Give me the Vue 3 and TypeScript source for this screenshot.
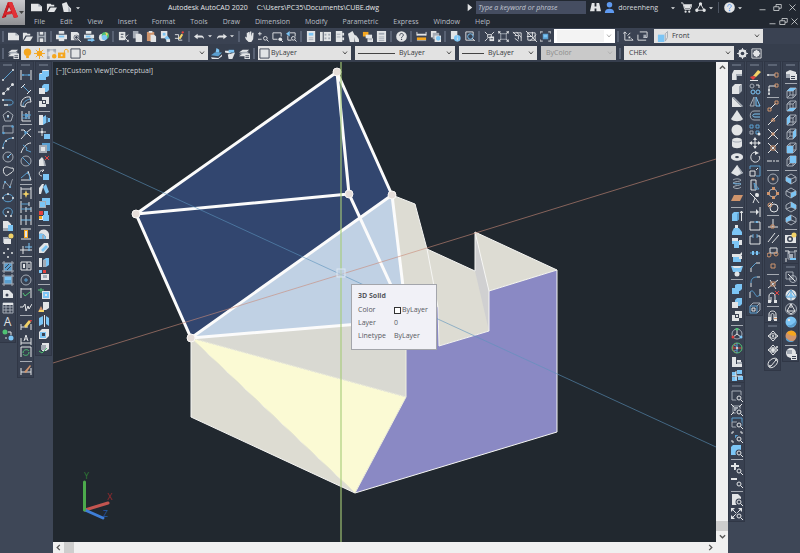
<script setup lang="ts">
import { h, ref } from 'vue'
import type { FunctionalComponent } from 'vue'

// Icon parts are "<tone>:<path>" joined by ";". A lower-case tone fills, an upper-case tone strokes.
// "@x,y,r" is a circle and "#x,y,w,h" a rectangle, on a 12 x 12 grid.
const tones: Record<string, string> = {
  w: '#e2e4e6', g: '#a3aab4', b: '#7cc5f5', d: '#5a9fd0', o: '#f5a61e', n: '#4fc274',
  r: '#e2423f', y: '#f2d267', k: '#3a4252', t: '#cf946c', u: '#5f9af0',
}

const box = 'G:M2 4H8V11H2ZM2 4L5 1H11V8L8 11M8 4L11 1M5 1V8H11M2 11L5 8'
const solid = 'g:M8 4L11 1V8L8 11Z;w:#1,4,7,7;w:M1 4L4 1H11L8 4Z'
const mag = 'W:@8,8,2;W:M9.5 9.5L11.5 11.5'
const lens = 'k:@8,8,3.5;W:@8,8,2;W:M9.5 9.5L12 12'

const icons: Record<string, string> = {
  new: 'w:M0 2H8L12 5V10H0Z;g:M8 2V5H12Z',
  open: 'w:M1 2H5L6 3H9V5H4L1 10Z;w:M5 6H12L9 11H2Z',
  page: 'w:M1 2L6 0L8 4L11 7V11H3Z;g:M8 4L11 11H8Z',
  save: 'g:#1,1,10,11;k:#3,1,6,4;w:#4,1,4,3;k:#3,7,6,5;w:#4,8,4,4',
  print: 'w:#3,0,6,3;w:#0,4,12,5;b:#3,5,6,2;w:#3,8,6,3',
  preview: 'w:M1 1H8L10 3V10H1Z;k:@7,7,3;W:@7,7,2;W:M9 9L12 12',
  publish: 'w:#2,0,6,3;w:#0,4,11,4;b:#2,5,5,2;b:M4 9H8V7L12 10L8 12V11H4Z',
  globe: 'w:@5,7,4;n:@8,5,4;b:@7,7,3;y:M8 1L11 3L9 6Z',
  cut: 'w:#1,1,7,9;k:M3 3H6V4H3ZM3 6H6V7H3Z;W:M5 5L11 11M11 4L5 10;W:@11,11,1',
  copy: 'g:#1,0,6,8;w:M4 3H9L11 5V12H4Z',
  paste: 't:#1,1,8,10;w:#3,0,4,2;w:M5 4H9L11 6V12H5Z',
  match: 'w:#1,0,7,8;b:#3,2,3,3;b:M5 7L8 5L11 9L8 12Z;w:#7,9,4,3',
  edit: 'W:M1 4H5V10H9M1 8H6;r:M8 1L10 0L11 2L9 3Z;y:M5 8L8 3L10 4L7 9Z',
  undo: 'w:M0 6L4 3V5H8C10 5 11 7 11 9C10 7 9 7 8 7H4V9Z',
  redo: 'w:M12 6L8 3V5H4C2 5 1 7 1 9C2 7 3 7 4 7H8V9Z',
  caret: 'w:M3 5H9L6 8Z',
  pan: 'w:M1 6L3 7V2H4.5V6V1H6V5L6.5 0.5H8V6L9 2H10.5L10 9L8 12H5L2 9Z',
  zoomrt: 'W:M0 3H4M2 1V5M0 9H4;' + mag,
  zoomwin: 'W:M1 2H10V6M1 2V9H6;w:@9,9,2;W:M10 10L12 12',
  zoomprev: 'W:M4 2H10V6M2 5V10H6;b:M0 3L4 0V6Z;' + mag,
  props: 'w:#1,0,9,12;b:#3,2,5,3;g:#3,7,5,1;g:#3,9,5,1',
  dc: 'w:#0,1,12,10;k:#3,1,1,10;g:#5,3,2,2;g:#9,3,2,2;g:#5,7,2,2;g:#9,7,2,2',
  tool: 'w:#2,0,7,12;g:#3,3,4,1;g:#3,6,4,1;w:#9,2,2,3;w:#9,7,2,3',
  sheet: 'w:M0 3L5 0L7 4V12H2Z;w:M6 4L9 5L12 9V12H8Z',
  markup: 'o:#1,1,6,5;w:#4,4,7,4;w:#6,8,6,4;g:#7,9,4,1',
  calc: 'w:#1,0,10,12;g:#3,2,6,2;g:#3,6,6,1;g:#3,8,6,1;g:#3,10,6,1',
  help: 'w:@6,6,5.8;K:M4 5C4 2 8 2 8 4.5C8 6 6 6 6 7.5;k:#5.4,8.5,1.3,1.3',
  measure: 'w:#1,3,10,2;o:#1,7,10,3;g:#1,10,10,1;W:M1 1V5M11 1V5',
  layerp: 'w:#1,0,6,7;g:#3,2,7,7;w:#5,5,7,7;b:@9,8,2.5',
  info: 'w:#1,0,7,9;b:@8,8,3.6;w:#7.5,7,1,3;w:#7.5,5,1,1',
  zoomobj: 'W:M2 1V10H11M2 1H10V5;B:@7,6,3;W:M9 8L12 11',
  vp1: 'W:M1 1L4 4M8 4L11 1M1 11L4 8;W:#4,4,4,3;w:#6,6,5,5;k:#7,8,3,1',
  vp2: 'G:#3,3,6,6;W:M0 1H3M1 0V3M9 1H12M11 0V3M0 11H3M1 9V12M9 11H12M11 9V12M1 1L3 3M11 1L9 3M1 11L3 9M11 11L9 9',
  vp3: 'W:M1 2H10V11M3 5H7V9;W:M1 1L5 5M5 1L10 7M3 8L7 11',
  vp4: 'W:#2,2,8,8;W:M0 0L12 12M11 4L4 11M1 6L7 6V1',
  vp5: 'd:#3,3,6,6;b:#4,4,4,3;W:M0 3V1H3M9 1H12V3M0 9V11H3M9 11H12V9',
  ucs: 'W:M2 1V10H11M0 3L2 1L4 3M9 8L11 10M5 5L8 2;w:#6,6,2,2',
  ucs2: 'W:M1 4V10H10M3 1H11V7H7;g:#7,4,3,3',
  cubeblue: 'W:M2 3L5 0.5H11.5V7L9 10;G:M9 3L11.5 0.5V7L9 11Z;b:#1,4,7,8',
  layers: 'w:M0 5L4 2H11L8 5Z;g:M0 7L4 4H11L8 7Z;w:M0 9L4 6H11L8 9Z;w:#6,6,6,6;k:#7,8,4,1;k:#7,10,4,1',
  bulb: 'o:@6,4.5,4;o:#4.5,8,3,3',
  sun: 'o:@6,6,3;O:M6 0V12M0 6H12M2 2L10 10M10 2L2 10',
  vpf: 'g:#1,1,3,3;g:#1,9,3,3;G:M2 2V10M2 2H10V6;g:#8,1,3,3;o:@9,9,2.5',
  unlock: 'o:#0,5,8,6;O:M7 6V3C7 1 11 1 11 3V5;w:#3,7,2,2',
  swatch: 'w:#1,1,10,10;K:#1,1,10,10',
  lay1: 'd:M0 8L4 5H12L8 9Z;w:M0 10L8 11L12 7V9L8 12H1Z;b:M6 0L9 2V5H5Z',
  lay2: 'w:M0 3H5L7 4L5 6L0 5Z;b:M4 2H10V5H4Z;w:M3 7L11 5L8 12H4Z',
  gear: 'W:M6 0V12M0 6H12M2 2L10 10M10 2L2 10;w:@6,6,4.5;k:@6,6,2',
  burst: 'W:#1,1,10,10;w:@6,6,3.5;W:M6 2V10M2 6H10M3 3L9 9M9 3L3 9',
  // drawing
  line: 'D:M1 11L11 1;w:@1,11,1;w:@11,1,1',
  cline: 'G:M1 11L11 1;w:@1.5,10.5,1.5;w:@6,6,1.5;w:@10.5,1.5,1.5',
  pline: 'D:M1 4H8C12 4 12 9 8 9H5;w:@1,4,1;w:@3,9,1;w:@5,9,1',
  polygon: 'G:M6 1L11 5L9 11H3L1 5Z;B:M6 5V8;w:@6,6,1',
  rect: 'G:#1,2,10,7;d:@1.5,9,1.3;d:@10.5,2.5,1.3',
  arc: 'D:M1 11C1 5 5 1 11 1;w:@1,11,1;w:@4,4,1;w:@11,1,1',
  circle: 'G:@6,6,5;B:M6 6L9 3;b:@6,6,1',
  revcloud: 'W:M2 3C5 0 8 4 11 3C13 7 8 8 6 10C3 12 0 6 2 3Z',
  spline: 'G:M1 11C2 3 4 4 6 7C9 12 9 2 11 1;b:@3,4,1;b:@8,9,1',
  ellipse: 'D:M1 6C1 1 11 1 11 6C11 11 1 11 1 6Z;w:@6,2,1;w:@1,6,1;w:@11,6,1',
  ellarc: 'D:M4 10C-2 7 2 1 7 2C11 3 11 7 9 9;w:@6,6,1;w:@9,10,1;w:@4,10,1',
  insblock: 'w:M1 1H6L9 4V8H1Z;b:#6,5,5,6;g:#1,8,5,3',
  mkblock: 'g:M1 4H6L8 6V10H1Z;w:#2,6,7,5;y:@9,3,2.5',
  point: 'w:@6,2,1;w:@2,6,1;w:@10,6,1;w:@6,10,1',
  hatch: 'd:#2,2,8,8;G:M2 0V12M10 0V12M0 2H12M0 10H12;K:M3 7L7 3M5 9L9 5',
  gradient: 'd:#2,2,8,8;b:#3,3,6,3;G:M2 0V12M10 0V12M0 2H12M0 10H12',
  region: 'w:M1 2H7L11 6V10H1Z;k:@5,7,1.5',
  table: 'G:#1,1,10,10;w:#1,1,10,2;G:M1 5H11M1 8H11M4 3V11M8 3V11',
  addsel: 'n:@3,3,2.5;b:@9,9,2.5;W:M6 3H9V6;g:@4,9,1',
  // dimension
  dlin: 'W:M1 1V11M11 1V11;D:M2 6H10;d:@3,6,1;d:@9,6,1',
  dali: 'D:M3 3L9 9;W:M1 5L5 1M7 11L11 7',
  darc: 'D:M3 10C3 6 6 4 10 3;W:M1 10C0 4 5 0 10 1M5 11C5 8 7 6 11 6M1 10L5 11M10 1L11 6',
  dord: 'W:M2 1V11H11M6 3V9M9 1V9;D:M2 5H11M2 8H10;d:#5,4,3,3',
  drad: 'W:M1 2H4L11 9M1 11C4 8 7 3 11 1;d:M4 3L8 4L5 7Z',
  djog: 'W:M1 11C3 5 7 1 11 1;D:M3 3L7 6L6 8L11 10',
  ddia: 'G:@6,6,5;D:M2 2L10 10',
  dang: 'W:M1 11H11L8 2;D:M1 9L8 3M7 4C10 6 10 8 9 11',
  quick: 'W:M1 0V12M11 0V12M1 2H11;y:M6 3L7 6L10 7L7 8L6 11L5 8L2 7L5 6Z',
  base: 'W:M1 0V12;D:M1 3H9M1 8H6;W:M9 1V5M6 6V11M11 6V11;B:M6 8H11',
  cont: 'W:M1 1V11M6 1V11M11 1V11;B:M1 6H11',
  space: 'W:M1 1H11M1 11H11;o:#4,2,4,8;w:#5,3,2,6',
  brk: 'W:M3 4V12M0 8H12;B:M9 1V9M5 5H12',
  tol: 'W:#1,2,10,8;w:#3,4,2,4;W:M7 2V10M9 4V8',
  cmark: 'G:@6,6,5;D:M6 4V8M4 6H8',
  inspect: 'W:M1 1V11M11 1V11M1 2H11;N:M3 6L5 9L10 5',
  jogl: 'W:M0 6H3L5 3L6 10L8 5L9 8L12 3',
  dedit: 'W:M1 5V11M11 5V11M1 8H8;y:M4 7L9 1L11 3L6 9Z;r:M9 1L11 3L12 1Z',
  dtedit: 'W:M1 5V12M11 5V12M1 10H11M4 8L6 2L8 8M5 6H7',
  dupd: 'W:M1 1V11M11 1V11M1 1H11;N:M3 7C3 3 8 3 9 5M9 6C9 10 4 10 3 8',
  dstyle: 'W:M1 4V11M11 4V11M1 8H11;t:M4 8L10 1L11 2L6 9Z',
  // solid editing
  union: 'b:M1 5H4V2L5 1H11V7L9 8H8V11H1Z;w:M4 2L5 1H11L10 2ZM1 5L2 4H4V5Z',
  subtract: 'b:M4 3L6 1H11V7L9 9H4Z;w:#1,5,6,6',
  intersect: 'w:#1,5,7,6;w:M4 1H11V8H4Z;k:#4,4,4,4;w:#5,5,2,2',
  exface: 'w:#1,1,4,10;b:M5 3L8 1V9L5 11Z;D:M9 3V9;b:#10,4,2,4',
  mvface: 'W:M4 0V8M0 4H8;b:#6,6,6,5;w:#3,3,2,2',
  offace: 'd:#4,1,8,8;g:#1,3,8,8;w:#3,5,4,4',
  delface: 'w:M1 5L4 2L7 7L6 11H1Z;g:M5 3L7 7L8 11H6Z;R:M7 1L11 5M11 1L7 5',
  rotface: 'W:M6 1C0 1 0 7 4 7M6 1L4 3;b:#5,5,6,6',
  tapface: 'w:M1 5L4 1H6L3 11H1Z;b:M5 4L8 1L11 9L8 11Z',
  cpface: 'b:#4,1,8,7;g:#1,4,7,7;b:#2,5,5,5',
  colface: 'r:#1,1,4,4;b:#6,1,4,4;w:#1,6,4,4;b:#5,5,6,6;o:#1,6,3,3',
  filedge: 'w:M1 4C4 0 10 1 11 6V11H8C8 7 5 5 1 6Z;b:M1 6C5 5 8 7 8 11H1Z;g:#4,7,2,4',
  chaedge: 'w:M1 6L6 1H10L11 5L6 11H1Z;b:M3 8L8 3L10 5L5 10Z',
  coledge: 'w:#1,2,3,9;b:M5 4L8 2H11V9L8 11H5Z;g:#5,4,3,7',
  cpedge: 'b:#1,1,3,3;r:#5,1,3,3;w:#3,5,8,6;g:#5,6,4,3',
  imprint: 'N:M3 1V6M0 3H6;w:#4,4,8,8;b:#5,5,6,6;w:#7,7,2,2',
  clean: 'w:M5 1H11V7L8 9H5Z;t:M3 5L6 11H0Z;y:#1,9,5,2',
  separate: 'b:M1 3L5 1V9L1 11Z;b:M8 1L11 3V11L8 9Z;W:M6.5 0V12',
  shell: 'w:M1 4L4 1H11V8L8 11H1Z;b:#2,4,6,6;k:#4,5,3,3',
  check: 'w:M4 1H11V7L8 9H4Z;g:#3,3,5,5;N:M1 9L4 11L9 6',
  // modelling
  psolid: 'w:M1 5L3 1H11V7H6V11H1Z;g:M5 5H11V7H6V11H5Z',
  box: solid,
  wedge: 'w:M1 1L11 11H1Z;g:M1 1L3 1L12 10L11 11Z',
  cone: 'w:M6 0L12 9C10 12 2 12 0 9Z',
  sphere: 'w:@6,6,5.5',
  cyl: 'w:M1 3C2 0 10 0 11 3V9C10 12 2 12 1 9Z;g:M1 3C3 5 9 5 11 3L11 4C9 6 3 6 1 4Z',
  torus: 'w:M0 6C0 1 12 1 12 6C12 11 0 11 0 6Z;k:M4 6C4 4.5 8 4.5 8 6C8 7.5 4 7.5 4 6Z',
  pyr: 'w:M6 0L12 8L6 11L0 8Z;g:M6 0L12 8L6 11Z;w:M6 0L10 8L6 11Z',
  helix: 'G:M2 2C5 0 9 1 10 2C9 4 4 3 2 5C4 7 9 4 10 6C9 8 4 7 2 9C4 11 8 11 10 9;D:M2 5C5 7 8 5 10 6',
  plane: 't:M3 3H12L9 9H0Z',
  extrude: 'b:M1 4L3 2H8V9L6 11H1Z;d:M6 4L8 2V9L6 11Z;W:M10.5 11V1M9 3L10.5 1L12 3',
  revolve: 'w:M4 1H7V4H4Z;b:M3 4H8L11 8V10H1V8Z;b:#1,9,10,2',
  sweep: 'w:M1 1H7V4H1Z;b:M1 4H11V8H8V11H3V7H1Z;w:#8,3,3,5',
  presspull: 'w:M1 3H9L11 1V4L9 6H1Z;b:#2,6,8,5;w:#8,5,3,3',
  loft: 'b:M0 1H12L10 7H2Z;w:M1 1H11L9 3H3Z;w:@6,9,2.5',
  uni2: 'b:M1 5H4V2L6 1H11V6L9 8H8V11H1Z',
  gizmo: 'G:@6,6,5;W:M6 2V6L2 9M6 6L10 9;n:@6,1,1.5;r:@2,9,1.5;b:@10,9,1.5',
  gizmo2: 'R:M6 1C0 4 0 9 6 11M1 6H11;N:@6,6,5;D:M6 1V11M3 3C8 5 8 8 3 9;w:@6,6,1',
  align3: 'w:M1 1H5V8H11V11H1Z;g:#6,6,5,2;w:#6,4,4,2',
  arr3: 'b:#1,3,4,4;b:#6,1,5,4;b:#1,8,5,4;b:#7,7,5,4;W:M5 2V11M1 7H11',
  // modify
  erase: 'y:M4 7L9 1L12 3L7 8Z;r:M1 8L4 7L7 8L4 11Z;w:M1 11H9V12H1Z',
  copyobj: 'G:@3,3,2;B:@4,9,2;B:@9,9,2;W:M7 2H10V5',
  mirror: 'G:M5 1L1 10H5Z;B:M7 1L11 10H7Z',
  offset: 'G:M11 1H5C0 1 0 10 5 10H11;B:M11 4H6C3 4 3 7 6 7H11',
  array: 'D:#1,1,3,3;D:#7,1,3,3;G:#1,7,3,3;D:#7,7,3,3;w:@10,10,1.5',
  move: 'W:M6 1V11M1 6H11;w:M6 0L8 3H4ZM6 12L8 9H4ZM0 6L3 4V8ZM12 6L9 4V8Z',
  rotate: 'W:M7 1C1 1 0 9 5 11C9 12 12 8 10 5;w:M6 0L10 2L6 4Z',
  scale: 'D:M1 4V1H11V11H7;W:#1,6,5,5;W:M7 5L9 3',
  stretch: 'W:M2 1H7V11H2Z;D:M5 4L10 10H6Z',
  trim: 'W:M1 1L7 7M7 1L9 5M6 6L4 11M7 7L10 11;w:@8,3,2',
  extend: 'W:M1 6H9M11 1V11;w:M7 3L10 6L7 9Z',
  brkpt: 'W:M5 2H1V10H11V2H7;D:M5 2H8;b:@8,2,1',
  brkobj: 'W:M4 3H1V11H11V3H8;D:M4 1V5M8 1V5',
  join: 'D:M1 6H11;b:#3,4,2,4;b:#7,4,2,4',
  chamfer: 'D:M2 7L7 2;W:M2 11V7M7 2H11',
  fillet: 'D:M2 8C2 4 4 2 8 2;W:M2 8V12M8 2H11',
  blend: 'W:M1 10V4M11 8V1;D:M1 4C6 -1 6 14 11 6',
  explode: 'D:M1 4H8V11H1Z;G:M1 4L4 1H11V8L8 11M8 4L11 1;W:#3,6,3,3',
  // object snap
  track: 'W:M1 6H8;w:@1,6,1;T:#8,4,3,4',
  from: 'W:M2 11V3M2 3H9;w:@2,7,1;T:#8,1,3,3;w:@2,11,1',
  end: 'W:M3 9L9 3;T:#1,8,3,3;T:#8,1,3,3',
  mid: 'W:M1 11L11 1;T:M6 4L8 7H4Z',
  int: 'W:M1 1L11 11M11 1L1 11;T:#5,5,2,2',
  appint: 'W:M1 1L11 11M11 1L1 11;T:#4,4,4,4',
  ext: 'W:M0 6H12;k:#5,5,1,2;k:#8,5,1,2',
  center: 'G:@6,6,5;t:@6,6,1.5',
  quad: 'G:@6,6,4;t:#5,0,3,3;t:#5,9,3,3;t:#0,5,3,3;t:#9,5,3,3',
  tan: 'W:@7,7,4;W:M1 6L6 1;T:@3,4,2',
  perp: 'W:M6 1V9M1 9H11;T:#4,7,3,3',
  par: 'W:M1 10L8 1M5 11L12 3',
  ins: 'W:#3,2,7,5;T:@2,9,2;T:@9,8,2',
  node: 'T:#4,4,4,4',
  near: 'W:M1 10L11 2M3 2L9 11;T:#4,4,4,4',
  none: 'W:M2 11V5C2 1 8 1 8 5V11M4 11V6;w:#1,9,3,3;w:#7,9,3,3;R:M8 0L12 4M12 0L8 4',
  osnap: 'W:M2 11V5C2 1 9 1 9 5V11M4 11V6C4 4 7 4 7 6V11;w:#1,8,3,4;w:#7,8,3,4;t:#7,9,3,1',
  orb1: 'W:M6 1C2 4 2 8 6 11C10 8 10 4 6 1M1 6C4 3 8 3 11 6C8 9 4 9 1 6;w:@6,6,1',
  orb2: 'W:M6 1C2 4 2 8 6 11C10 8 10 4 6 1M1 6C4 3 8 3 11 6C8 9 4 9 1 6;w:@6,6,2;w:@10,3,1',
  orb3: 'W:M2 10C-2 5 7 -1 10 2C13 6 5 13 2 10M4 9L9 3;w:@9,3,1;w:@3,9,1',
  // views
  vmgr: 'w:M1 3L5 1L11 3V6H1Z;g:#1,5,5,4;w:#5,5,7,6;k:#6,7,4,1;k:#6,9,4,1',
  vtop: box + ';b:M2 4L5 1H11L8 4Z',
  vbot: box + ';b:M2 11L5 8H11L8 11Z',
  vleft: box + ';b:M2 4L5 1V8L2 11Z',
  vright: box + ';b:M8 4L11 1V8L8 11Z',
  vfront: box + ';b:#2,4,6,7',
  vback: box + ';b:#5,1,6,7',
  sw: 'G:M6 1L11 4V8L6 11L1 8V4ZM1 4L6 6L11 4M6 6V11;b:M1 4L6 6V11L1 8Z',
  se: 'G:M6 1L11 4V8L6 11L1 8V4ZM1 4L6 6L11 4M6 6V11;b:M6 6L11 4V8L6 11Z',
  ne: 'G:M6 1L11 4V8L6 11L1 8V4ZM1 8L6 6L11 8M6 6V1;b:M6 1L11 4V8L6 6Z',
  nw: 'G:M6 1L11 4V8L6 11L1 8V4ZM1 8L6 6L11 8M6 6V1;b:M1 4L6 1V6L1 8Z',
  camera: 'w:#0,3,11,8;k:@5,7,3;w:@5,7,1.5;y:@9,3,2.5',
  vport: 'G:#3,2,7,7;W:M0 1H4V4M12 1H9M1 8V12;g:#4,4,4,4;b:#5,8,6,2',
  wf2: 'G:#1,1,7,7;G:@8,8,3.5;W:M3 3L10 10',
  wf3: 'w:@6,6,5.5;D:M6 1L1 8L11 8ZM6 1V11;b:M6 4L9 8H3Z',
  wfh: 'G:@6,6,5.5;W:M6 1L2 8H10ZM2 8L6 11L10 8M6 5V1',
  real: 'b:@6,6,5.5;d:M2 9C5 10 10 8 11 4C13 11 5 13 2 9Z;w:@4,4,1.3',
  conc: 't:@6,6,5.5;o:M2 3C5 -1 11 1 11 5C8 7 4 5 2 3Z;d:M1 8L5 11L9 11C4 14 0 10 1 8Z',
  vsmgr: 'w:@6,5,5;g:M2 2H7V6H2Z;w:#6,6,6,6;k:#7,8,4,1;k:#7,10,4,1',
  // zoom
  zwin: 'G:#1,1,9,9;' + lens,
  zdyn: 'G:#2,2,7,7;W:M0 0L3 3M11 0L8 3M0 11L3 8;g:#3,3,4,4;' + lens,
  zscl: 'D:M1 5V1H11V9;G:#1,5,5,5;' + lens,
  zcen: 'W:M1 3V1H3M9 1H11V3M1 9V11H3;d:#4,4,3,3;' + lens,
  zobj: 'b:M0 2L2 0H10V8L8 10H0Z;' + lens,
  zin: 'w:M3 0H5V2H8V4H5V7H3V4H0V2H3Z;' + lens,
  zout: 'w:#0,2,6,2;' + lens,
  zall: 'w:M1 0H7L10 3V11H1Z;' + lens,
  zext: 'W:M1 1L10 10M10 1L1 10;w:M0 0H4L0 4ZM11 0V4L7 0ZM0 11V7L4 11Z;' + lens,
  // title bar
  bino: 'w:M2 1H5V5H7V1H10L12 10H7V7H5V10H0Z',
  user: 'u:@6,3,3;u:M1 11C1 6 11 6 11 11V12H1Z',
  cart: 'W:M0 1H2L4 8H10L12 3H3;w:M3 3H11L10 7H4Z;w:@5,10.5,1.2;w:@9,10.5,1.2',
  a360: 'W:M6 2L2 9H10Z;w:@6,2,1.8;w:@2,9,1.8;w:@10,9,1.8',
  qhelp: 'w:@6,6,5.8;U:M4 5C4 2 8 2 8 4.5C8 6 6 6 6 7.5;u:#5.3,8.5,1.5,1.5',
  min: 'W:M2 9H10',
  max: 'W:#1,5,7,5;W:M4 5V2H11V7H8',
  close: 'W:M2 2L10 10M10 2L2 10',
  play: 'w:M4 2L9 6L4 10Z',
}

const expand = (d: string): string =>
  d
    .replace(/@([-\d.]+),([-\d.]+),([-\d.]+)/g, (_m, x, y, r) => `M${+x - +r} ${y}a${r} ${r} 0 1 0 ${2 * +r} 0a${r} ${r} 0 1 0 ${-2 * +r} 0Z`)
    .replace(/#([-\d.]+),([-\d.]+),([-\d.]+),([-\d.]+)/g, (_m, x, y, w, k) => `M${x} ${y}h${w}v${k}h-${w}Z`)

const Glyph: FunctionalComponent<{ name: string }> = ({ name }) =>
  h(
    'svg',
    { viewBox: '0 0 12 12', class: 'glyph', 'aria-hidden': 'true' },
    (icons[name] ?? '').split(';').filter(Boolean).map((part) => {
      const key = part[0]
      const line = key !== key.toLowerCase()
      const tone = tones[key.toLowerCase()]
      return h('path', { d: expand(part.slice(2)), fill: line ? 'none' : tone, stroke: line ? tone : 'none', 'stroke-width': 1 })
    }),
  )
Glyph.props = ['name']

const menus = ['File', 'Edit', 'View', 'Insert', 'Format', 'Tools', 'Draw', 'Dimension', 'Modify', 'Parametric', 'Express', 'Window', 'Help']
const list = (s: string): string[] => s.split(' ')

const standard = list('| new open save | print preview publish globe | cut copy paste match edit | undo ^ redo ^ | pan zoomrt zoomwin zoomprev | props dc tool sheet markup calc | help | measure layerp | info zoomobj | vp1 vp2 vp3 vp4 vp5')

const columns = (groups: string[][]): string[][][] => groups.map((g) => g.map(list))
const leftColumns = columns([
  ['line cline pline polygon rect arc circle revcloud spline ellipse ellarc insblock mkblock point hatch gradient region table *text addsel'],
  ['dlin dali darc dord | drad djog ddia dang | quick base cont space brk | tol cmark inspect jogl | dedit dtedit dupd | dstyle'],
  ['union subtract intersect | exface mvface offace delface rotface tapface cpface colface | filedge chaedge coledge cpedge | imprint clean separate shell check'],
])
const rightColumns = columns([
  ['psolid box wedge cone sphere cyl torus pyr helix plane | extrude revolve sweep presspull loft | uni2 subtract intersect | gizmo gizmo2 align3 arr3',
    'zwin zdyn zscl zcen zobj | zin zout | zall zext'],
  ['erase copyobj mirror offset array move rotate scale stretch trim extend brkpt brkobj join chamfer fillet blend explode'],
  ['track from | end mid int appint ext | center quad tan | perp par ins node | near none | osnap', 'orb1 orb2 orb3'],
  ['vmgr | vtop vbot vleft vright vfront vback | sw se ne nw | camera | vport', 'wf2 | wf3 wfh real conc | vsmgr'],
])

const paletteHeight = (items: string[]): string => {
  const rules = items.filter((i) => i === '|').length
  return `${Math.round(((items.length - rules) * 137 + rules * 42) / 10) + 6}px`
}

const keyword = ref('')
const quick = ref('')
</script>

<template>
  <div class="app">
    <header class="top">
      <button class="logo" aria-label="Application menu">
        <svg viewBox="0 0 25 25" aria-hidden="true">
          <path d="M2 18L8 2H12L18 17L14 18L12 13H7L6 17Z" fill="#a8141b" />
          <path d="M8 2H12L18 17L14 18L9 5Z" fill="#e23238" />
          <path d="M8 2L9 5L6 12L4 18H2Z" fill="#cf2028" />
          <path d="M5 12L11 11L12 14L5 15Z" fill="#d8262d" />
          <path d="M9 7L11 11L7 12Z" fill="#c4c4c8" />
          <path d="M19 11H24L21.5 14Z" fill="#444" />
        </svg>
      </button>
      <div class="bars">
        <div class="titlebar">
          <div class="quickaccess">
            <button v-for="n in ['new', 'open', 'page']" :key="n" class="ib" :aria-label="n"><Glyph :name="n" /></button>
            <button class="ib slim" aria-label="Customize quick access"><Glyph name="caret" /></button>
          </div>
          <h1><span>Autodesk AutoCAD 2020</span><span>C:\Users\PC35\Documents\CUBE.dwg</span></h1>
          <div class="account">
            <button class="ib" aria-label="Expand search"><Glyph name="play" /></button>
            <input v-model="keyword" class="search" type="text" placeholder="Type a keyword or phrase" aria-label="Search" />
            <button class="ib" aria-label="Find"><Glyph name="bino" /></button>
            <button class="signin"><Glyph name="user" />doreenheng<Glyph name="caret" /></button>
            <button class="ib" aria-label="Store"><Glyph name="cart" /></button>
            <button class="ib" aria-label="Apps"><Glyph name="a360" /></button>
            <button class="ib slim" aria-label="More apps"><Glyph name="caret" /></button>
            <i class="divider"></i>
            <button class="ib" aria-label="Help"><Glyph name="qhelp" /></button>
            <button class="ib slim" aria-label="More help"><Glyph name="caret" /></button>
          </div>
          <div class="window">
            <button class="ib" aria-label="Minimize"><Glyph name="min" /></button>
            <button class="ib" aria-label="Restore"><Glyph name="max" /></button>
            <button class="ib" aria-label="Close"><Glyph name="close" /></button>
          </div>
        </div>
        <nav class="menubar">
          <a v-for="m in menus" :key="m" href="#">{{ m }}</a>
          <div class="docwindow">
            <button aria-label="Minimize drawing"><Glyph name="min" /></button>
            <button aria-label="Restore drawing"><Glyph name="max" /></button>
            <button aria-label="Close drawing"><Glyph name="close" /></button>
          </div>
        </nav>
      </div>
    </header>

    <div class="toolrow">
      <div class="strip">
        <template v-for="(t, i) in standard" :key="i">
          <i v-if="t === '|'" class="grip"></i>
          <button v-else-if="t === '^'" class="ib slim" aria-label="More"><Glyph name="caret" /></button>
          <button v-else class="ib" :aria-label="t"><Glyph :name="t" /></button>
        </template>
      </div>
      <div class="combo plain w61">
        <select v-model="quick" aria-label="Viewport scale"><option value=""></option></select>
        <svg class="chev pale" viewBox="0 0 6 4"><path d="M1 0.5L3 3L5 0.5" /></svg>
      </div>
      <div class="strip">
        <i class="grip"></i>
        <button class="ib" aria-label="UCS"><Glyph name="ucs" /></button>
        <button class="ib" aria-label="Named UCS"><Glyph name="ucs2" /></button>
      </div>
      <div class="combo w109 after">
        <Glyph name="cubeblue" />
        <select aria-label="View"><option>Front</option></select>
        <svg class="chev" viewBox="0 0 6 4"><path d="M1 0.5L3 3L5 0.5" /></svg>
      </div>
    </div>

    <div class="toolrow second">
      <div class="strip">
        <i class="grip"></i>
        <button class="ib" aria-label="Layer properties"><Glyph name="layers" /></button>
      </div>
      <div class="combo tight w187">
        <Glyph v-for="n in ['bulb', 'sun', 'vpf', 'unlock', 'swatch']" :key="n" :name="n" />
        <select aria-label="Layer"><option>0</option></select>
        <svg class="chev" viewBox="0 0 6 4"><path d="M1 0.5L3 3L5 0.5" /></svg>
      </div>
      <div class="strip">
        <button v-for="n in ['lay1', 'lay2', 'layers']" :key="n" class="ib" :aria-label="n"><Glyph :name="n" /></button>
        <i class="grip"></i>
      </div>
      <div class="combo tight w93">
        <Glyph name="swatch" />
        <select aria-label="Color"><option>ByLayer</option></select>
        <svg class="chev" viewBox="0 0 6 4"><path d="M1 0.5L3 3L5 0.5" /></svg>
      </div>
      <div class="combo w100">
        <i class="sample long"></i>
        <select aria-label="Linetype"><option>ByLayer</option></select>
        <svg class="chev" viewBox="0 0 6 4"><path d="M1 0.5L3 3L5 0.5" /></svg>
      </div>
      <div class="combo w78">
        <i class="sample"></i>
        <select aria-label="Lineweight"><option>ByLayer</option></select>
        <svg class="chev" viewBox="0 0 6 4"><path d="M1 0.5L3 3L5 0.5" /></svg>
      </div>
      <div class="combo off w75">
        <select disabled aria-label="Plot style"><option>ByColor</option></select>
        <svg class="chev pale" viewBox="0 0 6 4"><path d="M1 0.5L3 3L5 0.5" /></svg>
      </div>
      <i class="grip"></i>
      <div class="combo w110">
        <select aria-label="Workspace"><option>CHEK</option></select>
        <svg class="chev" viewBox="0 0 6 4"><path d="M1 0.5L3 3L5 0.5" /></svg>
      </div>
      <div class="strip">
        <button class="ib" aria-label="Workspace settings"><Glyph name="gear" /></button>
        <button class="ib" aria-label="My workspace"><Glyph name="burst" /></button>
      </div>
    </div>

    <main class="work">
      <aside class="dock">
        <div v-for="(col, c) in leftColumns" :key="c" class="column">
          <div v-for="(items, p) in col" :key="p" class="palette" :style="{ height: paletteHeight(items) }">
            <i class="handle"></i>
            <template v-for="(t, i) in items" :key="i">
              <i v-if="t === '|'" class="rule"></i>
              <button v-else-if="t === '*text'" class="tool letter" aria-label="Multiline text">A</button>
              <button v-else class="tool" :aria-label="t"><Glyph :name="t" /></button>
            </template>
          </div>
        </div>
      </aside>

      <section class="viewport">
        <div class="drawing">
          <svg class="scene" viewBox="53 62 663 480" preserveAspectRatio="xMidYMid slice" role="img" aria-label="Model">
            <g stroke-linejoin="round">
              <path d="M191 338L406 320V397Z" fill="#d9d9d2" />
              <path d="M191 338V417L355 493Z" fill="#dddcd2" />
              <path d="M355 493L557 432V270L489 291V331L439 346L438 300L406 318V397Z" fill="#8a89c4" />
              <path d="M392 195L415 204L427 249L475 271V232L557 270L489 291V331L439 346L438 307L407 320Z" fill="#dddcd3" />
              <path d="M475 232L489 291V331L475 271Z" fill="#d0d0d1" />
              <path d="M191 338L406 397L355 493Z" fill="#fbfad4" />
              <g fill="none" stroke="#f6f6f4" stroke-width="1">
                <path d="M191 338V417L355 493L557 432V270L475 232V271L427 249L415 204L392 195" />
                <path d="M427 249L438 307L439 346L489 331V291L557 270M475 232L489 291" />
                <path d="M406 397L355 493L191 338L406 397V349" stroke="#efefdf" />
              </g>
              <path d="M337 72L136 214L191 338L392 195Z" fill="#32466f" />
              <path d="M191 338L392 195L407 320Z" fill="#c0d1e4" />
              <path d="M337 72L136 214L191 338L392 195ZM136 214L349 194L337 72M349 194L407 320L191 338M392 195L407 320" fill="none" stroke="#fbfbfb" stroke-width="3" />
              <g fill="#e6deda" stroke="#faf7f5" stroke-width="1">
                <circle cx="337" cy="72" r="4" /><circle cx="136" cy="214" r="4" /><circle cx="191" cy="338" r="4" />
                <circle cx="392" cy="195" r="4" /><circle cx="349" cy="194" r="4" />
              </g>
            </g>
            <path d="M53 363L716 159" stroke="#c98a78" stroke-opacity="0.6" />
            <path d="M53 142L716 447" stroke="#5b93bd" stroke-opacity="0.6" />
            <path d="M341 62V542" stroke="#a5cc78" stroke-width="1.5" stroke-opacity="0.75" />
            <rect x="337" y="269" width="8" height="8" fill="#c0d1e4" fill-opacity="0.6" stroke="#dce8f2" />
            <g stroke-width="3" stroke-linecap="round">
              <path d="M85 510L108 503" stroke="#c35550" /><path d="M85 510L103 518" stroke="#3f7fd8" /><path d="M84.5 510V482" stroke="#4caa4c" />
            </g>
            <g class="axes">
              <text x="84" y="479" fill="#2f7a35">Y</text>
              <text x="107" y="500" fill="#9c2b2e">X</text>
              <text x="103" y="517" fill="#2458a8">Z</text>
            </g>
          </svg>
          <p class="viewlabel">[−][Custom View][Conceptual]</p>
          <div class="tip" role="tooltip">
            <strong>3D Solid</strong>
            <dl>
              <dt>Color</dt><dd><i class="chip"></i>ByLayer</dd>
              <dt>Layer</dt><dd>0</dd>
              <dt>Linetype</dt><dd>ByLayer</dd>
            </dl>
          </div>
        </div>
        <div class="vscroll">
          <button aria-label="Scroll up"><svg viewBox="0 0 8 8"><path d="M1 5.5L4 2.5L7 5.5" /></svg></button>
          <i class="fill"></i><i class="thumb"></i>
          <button aria-label="Scroll down"><svg viewBox="0 0 8 8"><path d="M1 2.5L4 5.5L7 2.5" /></svg></button>
        </div>
        <div class="hscroll">
          <button aria-label="Scroll left"><svg viewBox="0 0 8 8"><path d="M5.5 1L2.5 4L5.5 7" /></svg></button>
          <i class="thumb"></i><i class="fill"></i>
          <button aria-label="Scroll right"><svg viewBox="0 0 8 8"><path d="M2.5 1L5.5 4L2.5 7" /></svg></button>
        </div>
        <i class="corner"></i>
      </section>

      <aside class="dock right">
        <div v-for="(col, c) in rightColumns" :key="c" class="column">
          <div v-for="(items, p) in col" :key="p" class="palette" :style="{ height: paletteHeight(items) }">
            <i class="handle"></i>
            <template v-for="(t, i) in items" :key="i">
              <i v-if="t === '|'" class="rule"></i>
              <button v-else class="tool" :aria-label="t"><Glyph :name="t" /></button>
            </template>
          </div>
        </div>
      </aside>
    </main>
  </div>
</template>

<style>
body { margin: 0; background: #3e4757; }
</style>

<style scoped>
.app {
  display: flex; flex-direction: column; min-height: 100vh; background: #3e4757; overflow: hidden;
  font-family: "Open Sans", "Noto Sans", sans-serif; font-size: 7px; line-height: 10px; color: #d6d9dd;
}
button { border: 0; padding: 0; margin: 0; background: none; font: inherit; color: inherit; display: flex; align-items: center; justify-content: center; }
i { display: block; flex: none; }
.glyph { display: block; width: 11px; height: 11px; flex: none; }
.ib { width: 14px; height: 14px; flex: none; }
.ib.slim { width: 8px; }
.slim .glyph { width: 8px; height: 8px; }

.top { display: flex; background: #222831; height: 28px; }
.logo { width: 25px; height: 25px; flex: none; background: linear-gradient(#c8c8cc, #8f9094); }
.logo svg { width: 25px; height: 25px; }
.bars { flex: 1; min-width: 0; }
.titlebar { display: flex; align-items: center; height: 15px; padding-right: 1px; }
.quickaccess { display: flex; gap: 1px; padding-left: 4px; }
h1 { display: flex; gap: 9px; margin: 0 0 0 86px; font-size: 7px; font-weight: 400; white-space: nowrap; color: #e4e6e8; }
.account { display: flex; align-items: center; margin-left: auto; }
.search { width: 110px; height: 13px; box-sizing: border-box; border: 0; padding: 0 2px; margin-right: 2px; background: #454d61; color: #e4e6e8; font: italic 7px "Open Sans", sans-serif; }
.search::placeholder { color: #c2c7d2; opacity: 1; }
.signin { gap: 3px; margin: 0 2px; white-space: nowrap; }
.signin .glyph:last-child { width: 8px; height: 8px; margin-left: 8px; }
.divider { width: 1px; height: 11px; background: #4b5360; margin: 0 3px; }
.window { display: flex; gap: 1px; margin-left: 11px; }
.window .glyph { width: 9px; height: 9px; }
.menubar { display: flex; gap: 15px; height: 13px; align-items: center; padding-left: 9px; }
.menubar a { color: #b9bec5; text-decoration: none; }
.docwindow { display: flex; gap: 2px; margin-left: auto; padding-right: 1px; }
.docwindow .glyph { width: 9px; height: 9px; }

.toolrow { display: flex; align-items: center; height: 16px; background: #3a4252; }
.toolrow.second { height: 18px; gap: 1px; background: #363e4d; }
.strip { display: flex; align-items: center; }
.grip { width: 2px; height: 11px; margin: 0 2px; background: #586173; }
.combo { display: flex; align-items: center; box-sizing: border-box; height: 14px; padding: 0 3px; gap: 2px; background: #e2e2e2; color: #33373e; flex: none; }
.combo select { flex: 1; min-width: 0; height: 12px; border: 0; padding: 0 2px; background: transparent; color: inherit; font: inherit; appearance: none; opacity: 1; }
.combo.tight { padding-left: 1px; gap: 1px; }
.combo.tight .glyph:last-of-type { height: 9px; }
.combo.tight select { padding: 0; }
.combo.plain { background: #fff; margin-left: 2px; }
.combo.plain select { background: #f3f3f3; }
.combo.off { background: #c9c9c9; color: #8b8b8b; margin-left: 3px; }
.chev { width: 6px; height: 4px; flex: none; fill: none; stroke: #555; }
.chev.pale { stroke: #b3b3b3; }
.after { margin-left: 5px; }
.w61 { width: 61px; } .w75 { width: 75px; } .w78 { width: 78px; } .w93 { width: 93px; } .w100 { width: 100px; margin-left: 3px; margin-right: 3px; }
.w109 { width: 109px; } .w110 { width: 110px; } .w187 { width: 187px; }
.sample { width: 22px; height: 1px; background: #444; }
.sample.long { width: 37px; }

.work { display: flex; flex: 1; }
.dock { display: flex; gap: 3px; width: 53px; flex: none; }
.dock.right { width: 71px; padding-left: 1px; }
.column { width: 15px; display: flex; flex-direction: column; gap: 1px; }
.palette { display: flex; flex-direction: column; background: #384050; box-shadow: 0 0 0 1px #303746; }
.handle { width: 9px; height: 2px; margin: 2px auto; background: #5b6474; }
.tool { flex: 137 0 0; min-height: 0; }
.tool .glyph { width: 12px; height: 12px; }
.letter { font-size: 12px; color: #dfe1e4; }
.rule { flex: 42 0 0; width: 12px; margin: 0 auto; background: linear-gradient(#a6abb3, #a6abb3) center / 12px 1px no-repeat; }

.viewport { flex: 1; min-width: 0; display: grid; grid-template: 1fr 11px / 1fr 12px; }
.drawing { position: relative; background: #21282f; overflow: hidden; }
.scene { position: absolute; inset: 0; width: 100%; height: 100%; }
.axes { font: 9px "Open Sans", sans-serif; }
.viewlabel { position: absolute; left: 3px; top: 4px; margin: 0; color: #d0d4d8; }
.tip { position: absolute; left: 298px; top: 222px; box-sizing: border-box; width: 86px; padding: 6px 4px 8px 6px; background: #f1f1f7; border: 1px solid #a3a5ab; color: #55585e; }
.tip strong { display: block; margin-bottom: 4px; font-weight: 700; }
.tip dl { display: grid; grid-template-columns: 36px 1fr; row-gap: 3px; margin: 0; white-space: nowrap; }
.tip dd { display: flex; align-items: center; gap: 1px; margin: 0; }
.chip { width: 5px; height: 5px; border: 1px solid #333; background: #fff; }
.vscroll, .hscroll, .corner { background: #f0f0f0; }
.vscroll, .hscroll { display: flex; }
.vscroll { flex-direction: column; }
.vscroll button { width: 12px; height: 11px; }
.hscroll button { width: 11px; height: 11px; }
.vscroll svg, .hscroll svg { width: 7px; height: 7px; fill: none; stroke: #555; stroke-width: 1.5; }
.fill { flex: 1; }
.thumb { background: #cdcdcd; }
.vscroll .thumb { height: 10px; }
.hscroll .thumb { width: 10px; }
</style>
